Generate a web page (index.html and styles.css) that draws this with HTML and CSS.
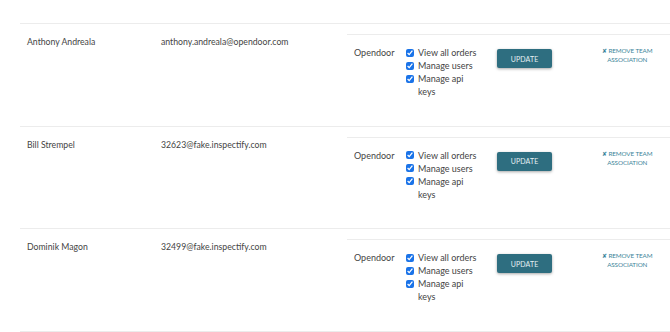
FILE: index.html
```html
<!DOCTYPE html>
<html>
<head>
<meta charset="utf-8">
<link rel="stylesheet" href="styles.css">
</head>
<body>
<div class="table">
  <div class="row">
    <div class="cell name">Anthony Andreala</div>
    <div class="cell email">anthony.andreala@opendoor.com</div>
    <div class="teams">
      <div class="team">
        <div class="tcell org">Opendoor</div>
        <div class="tcell perms">
          <label class="perm"><input type="checkbox" checked><span>View all orders</span></label>
          <label class="perm"><input type="checkbox" checked><span>Manage users</span></label>
          <label class="perm"><input type="checkbox" checked><span>Manage api keys</span></label>
        </div>
        <div class="tcell action"><button class="update">UPDATE</button></div>
        <div class="tcell remove"><a class="remove-link">✘ REMOVE TEAM<br>ASSOCIATION</a></div>
      </div>
    </div>
  </div>
  <div class="row">
    <div class="cell name">Bill Strempel</div>
    <div class="cell email">32623@fake.inspectify.com</div>
    <div class="teams">
      <div class="team">
        <div class="tcell org">Opendoor</div>
        <div class="tcell perms">
          <label class="perm"><input type="checkbox" checked><span>View all orders</span></label>
          <label class="perm"><input type="checkbox" checked><span>Manage users</span></label>
          <label class="perm"><input type="checkbox" checked><span>Manage api keys</span></label>
        </div>
        <div class="tcell action"><button class="update">UPDATE</button></div>
        <div class="tcell remove"><a class="remove-link">✘ REMOVE TEAM<br>ASSOCIATION</a></div>
      </div>
    </div>
  </div>
  <div class="row">
    <div class="cell name">Dominik Magon</div>
    <div class="cell email">32499@fake.inspectify.com</div>
    <div class="teams">
      <div class="team">
        <div class="tcell org">Opendoor</div>
        <div class="tcell perms">
          <label class="perm"><input type="checkbox" checked><span>View all orders</span></label>
          <label class="perm"><input type="checkbox" checked><span>Manage users</span></label>
          <label class="perm"><input type="checkbox" checked><span>Manage api keys</span></label>
        </div>
        <div class="tcell action"><button class="update">UPDATE</button></div>
        <div class="tcell remove"><a class="remove-link">✘ REMOVE TEAM<br>ASSOCIATION</a></div>
      </div>
    </div>
  </div>
</div>
</body>
</html>
```
FILE: styles.css
```css
html, body {
  margin: 0;
  padding: 0;
  background: #fff;
}
body {
  font-family: "Lato", "Noto Sans", sans-serif;
  font-size: 9px;
  color: #444;
  padding-top: 23px;
}
.table {
  margin-left: 20px;
  width: 660px;
  border-bottom: 1px solid #ececec;
}
.row {
  display: flex;
  height: 101.5px;
  border-top: 1px solid #ececec;
  line-height: 13px;
}
.cell {
  padding: 11px 7px 0;
}
.name {
  width: 120px;
  font-size: 8.7px;
}
.email {
  width: 179px;
  font-size: 8.7px;
}
.teams {
  flex: 1;
  padding-top: 10px;
}
.team {
  display: flex;
  border-top: 1px solid #ececec;
  padding-top: 11px;
}
.tcell {
  padding: 0 7px;
}
.org {
  width: 38px;
}
.perms {
  width: 77px;
  display: flex;
  flex-direction: column;
}
.perm {
  display: flex;
  align-items: flex-start;
}
.perm input {
  width: 8px;
  height: 8px;
  margin: 2.5px 4px 0 0;
  flex: none;
  accent-color: #1a73e8;
}
.perm span {
  width: 62px;
}
.action {
  width: 91px;
  padding-top: 3px;
}
.update {
  width: 55px;
  height: 19px;
  border: none;
  border-radius: 2px;
  background: #2e6e80;
  color: #e6f0f3;
  font-family: "Lato", sans-serif;
  font-size: 7px;
  letter-spacing: 0.1px;
  box-shadow: 0 1px 3px rgba(0, 0, 0, 0.35);
  padding: 0;
}
.remove {
  padding-top: 0;
}
.remove-link {
  display: inline-block;
  text-align: center;
  white-space: nowrap;
  color: #3c8499;
  font-size: 6.3px;
  letter-spacing: -0.1px;
  line-height: 9px;
}
```
